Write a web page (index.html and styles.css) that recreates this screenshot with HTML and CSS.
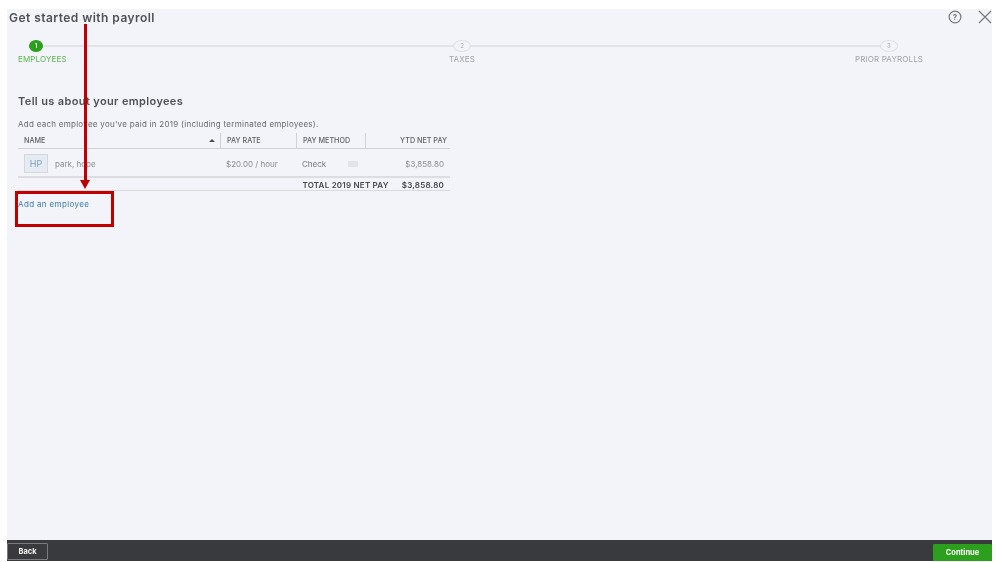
FILE: index.html
```html
<!DOCTYPE html>
<html lang="en">
<head>
<meta charset="utf-8">
<title>Get started with payroll</title>
<link rel="stylesheet" href="styles.css">
</head>
<body>
<div class="frame">
  <main class="panel">
    <header class="top">
      <h1 class="title">Get started with payroll</h1>
      <div class="top-icons">
        <svg class="icon-help" width="14" height="14" viewBox="0 0 14 14"><circle cx="7" cy="7" r="5.9" fill="none" stroke="#77797c" stroke-width="1.2"/><text x="7" y="9.6" text-anchor="middle" class="help-q">?</text></svg>
        <svg class="icon-close" width="14" height="14" viewBox="0 0 14 14"><path d="M1 1L13 13M13 1L1 13" stroke="#77797c" stroke-width="1.2" fill="none"/></svg>
      </div>
    </header>
    <ol class="steps">
      <li class="step step-active"><span class="dot">1</span><span class="step-label">EMPLOYEES</span></li>
      <li class="step step-mid"><span class="dot">2</span><span class="step-label">TAXES</span></li>
      <li class="step step-end"><span class="dot">3</span><span class="step-label">PRIOR PAYROLLS</span></li>
    </ol>
    <section class="content">
      <h2 class="heading">Tell us about your employees</h2>
      <p class="intro">Add each employee you've paid in 2019 (including terminated employees).</p>
      <div class="table">
        <div class="row head">
          <div class="cell c-name"><span>NAME</span><span class="sort"></span></div>
          <div class="cell c-rate">PAY RATE</div>
          <div class="cell c-method">PAY METHOD</div>
          <div class="cell c-ytd">YTD NET PAY</div>
        </div>
        <div class="row body-row">
          <div class="cell c-name"><span class="avatar">HP</span><span>park, hope</span></div>
          <div class="cell c-rate">$20.00 / hour</div>
          <div class="cell c-method"><span>Check</span><span class="chip"></span></div>
          <div class="cell c-ytd">$3,858.80</div>
        </div>
        <div class="row total">
          <span class="total-label">TOTAL 2019 NET PAY</span>
          <span class="total-value">$3,858.80</span>
        </div>
      </div>
      <a class="add" href="#">Add an employee</a>
    </section>
    <div class="arrow-line"></div>
    <div class="arrow-head"></div>
    <div class="callout"></div>
  </main>
  <footer class="footer">
    <button class="btn-back">Back</button>
    <button class="btn-continue">Continue</button>
  </footer>
</div>
</body>
</html>
```
FILE: styles.css
```css
* { box-sizing: border-box; }
html, body { margin: 0; height: 100%; background: #fff; }
body { font-family: "Inter", "Liberation Sans", sans-serif; color: #55575b; overflow: hidden; }
.frame { height: 562px; padding: 9px 7px 1px; display: flex; flex-direction: column; }
.panel { position: relative; flex: 1; background: #f3f4f9; min-height: 0; }
.top { height: 0; display: flex; justify-content: space-between; filter: blur(.3px); }
.title { margin: 0; font-size: 12px; line-height: 14px; font-weight: 600; color: #4f5155; letter-spacing: .45px; padding: 2px 0 0 2px; white-space: nowrap; }
.top-icons { display: flex; gap: 16px; padding-top: 1px; }
.help-q { font-size: 8px; font-weight: 700; fill: #77797c; font-family: "Inter", sans-serif; }
.steps { list-style: none; margin: 0; padding: 31px 68px 0 11px; display: flex; justify-content: space-between; position: relative; height: 81px; filter: blur(.3px); }
.steps::before { content: ""; position: absolute; left: 37px; right: 111px; top: 36px; height: 2px; background: #e2e3e6; }
.step { position: relative; display: flex; flex-direction: column; align-items: center; width: 70px; }
.step-active { align-items: flex-start; }
.step-mid { margin-right: 18px; }
.dot { width: 18px; height: 12px; border-radius: 50%; background: #f3f4f9; border: 1.5px solid #dedfe3; color: #bbbdc1; font-size: 6px; line-height: 9px; font-weight: 600; text-align: center; }
.step-active .dot { width: 14px; margin-left: 11px; background: #2ca01c; border-color: #2ca01c; color: #fff; }
.step-label { margin-top: 3px; font-size: 8px; line-height: 9px; color: #a0a2a6; white-space: nowrap; letter-spacing: .14px; }
.step-active .step-label { color: #58b84c; }
.content { padding: 0 0 0 11px; width: 443px; filter: blur(.3px); }
.heading { margin: 0; padding-top: 5px; font-size: 11px; line-height: 13px; font-weight: 600; color: #4f5155; letter-spacing: .36px; }
.intro { margin: 11px 0 0; font-size: 8px; line-height: 10px; color: #66686c; letter-spacing: .27px; white-space: nowrap; }
.table { margin-top: 3px; font-size: 8px; color: #8a8c90; }
.row { display: flex; align-items: center; }
.cell { display: flex; align-items: center; height: 100%; }
.head { height: 17px; border-bottom: 1px solid #cfd1d5; font-size: 7.2px; font-weight: 500; color: #5e6064; padding-top: 1px; }
.head .cell + .cell { border-left: 1px solid #cfd1d5; }
.c-name { width: 202px; padding-left: 6px; justify-content: space-between; padding-right: 5px; }
.c-rate { width: 76px; padding-left: 6px; }
.c-method { width: 69px; padding-left: 6px; }
.c-ytd { flex: 1; justify-content: flex-end; padding-right: 3px; }
.sort { width: 0; height: 0; border: 3px solid transparent; border-top: 0; border-bottom: 3px solid #4a4c50; }
.body-row { height: 29px; border-bottom: 2px solid #dcdde1; padding-top: 2px; }
.body-row .c-name { justify-content: flex-start; gap: 7px; }
.body-row .c-ytd { padding-right: 6px; }
.body-row .c-method { color: #77797d; }
.avatar { width: 24px; height: 19px; background: #e4ebf3; border: 1px solid #d5d7db; color: #7f9dbd; font-size: 9px; display: flex; align-items: center; justify-content: center; }
.chip { width: 10px; height: 6px; background: #e3e4e8; margin-left: 22px; }
.total { height: 13px; border-bottom: 1px solid #d8d9dd; justify-content: flex-end; font-size: 8px; font-weight: 600; color: #46484c; padding: 1px 6px 0 0; gap: 13px; letter-spacing: .22px; }
.add { display: block; margin-top: 8px; font-size: 8px; line-height: 10px; color: #3a7cb0; text-decoration: none; letter-spacing: .36px; }
.arrow-line { position: absolute; left: 77px; top: 15px; width: 3px; height: 158px; background: #c00000; }
.arrow-head { position: absolute; left: 73px; top: 171px; width: 0; height: 0; border-left: 5px solid transparent; border-right: 5px solid transparent; border-top: 9px solid #c00000; }
.callout { position: absolute; left: 8px; top: 182px; width: 99px; height: 36px; border: 3px solid #c00000; }
.footer { height: 21px; flex: none; background: #393a3d; display: flex; justify-content: space-between; align-items: flex-end; }
.btn-back { width: 41px; height: 17px; margin: 0 0 1px; padding: 0; background: transparent; border: 1px solid #7a7b7e; border-radius: 1px; color: #f3f3f3; font: 700 7.5px "Inter", sans-serif; filter: blur(.3px); }
.btn-continue { width: 59px; height: 17px; padding: 0; background: #2ca01c; border: 0; border-radius: 1px; color: #fff; font: 700 7.5px "Inter", sans-serif; filter: blur(.3px); }
```
